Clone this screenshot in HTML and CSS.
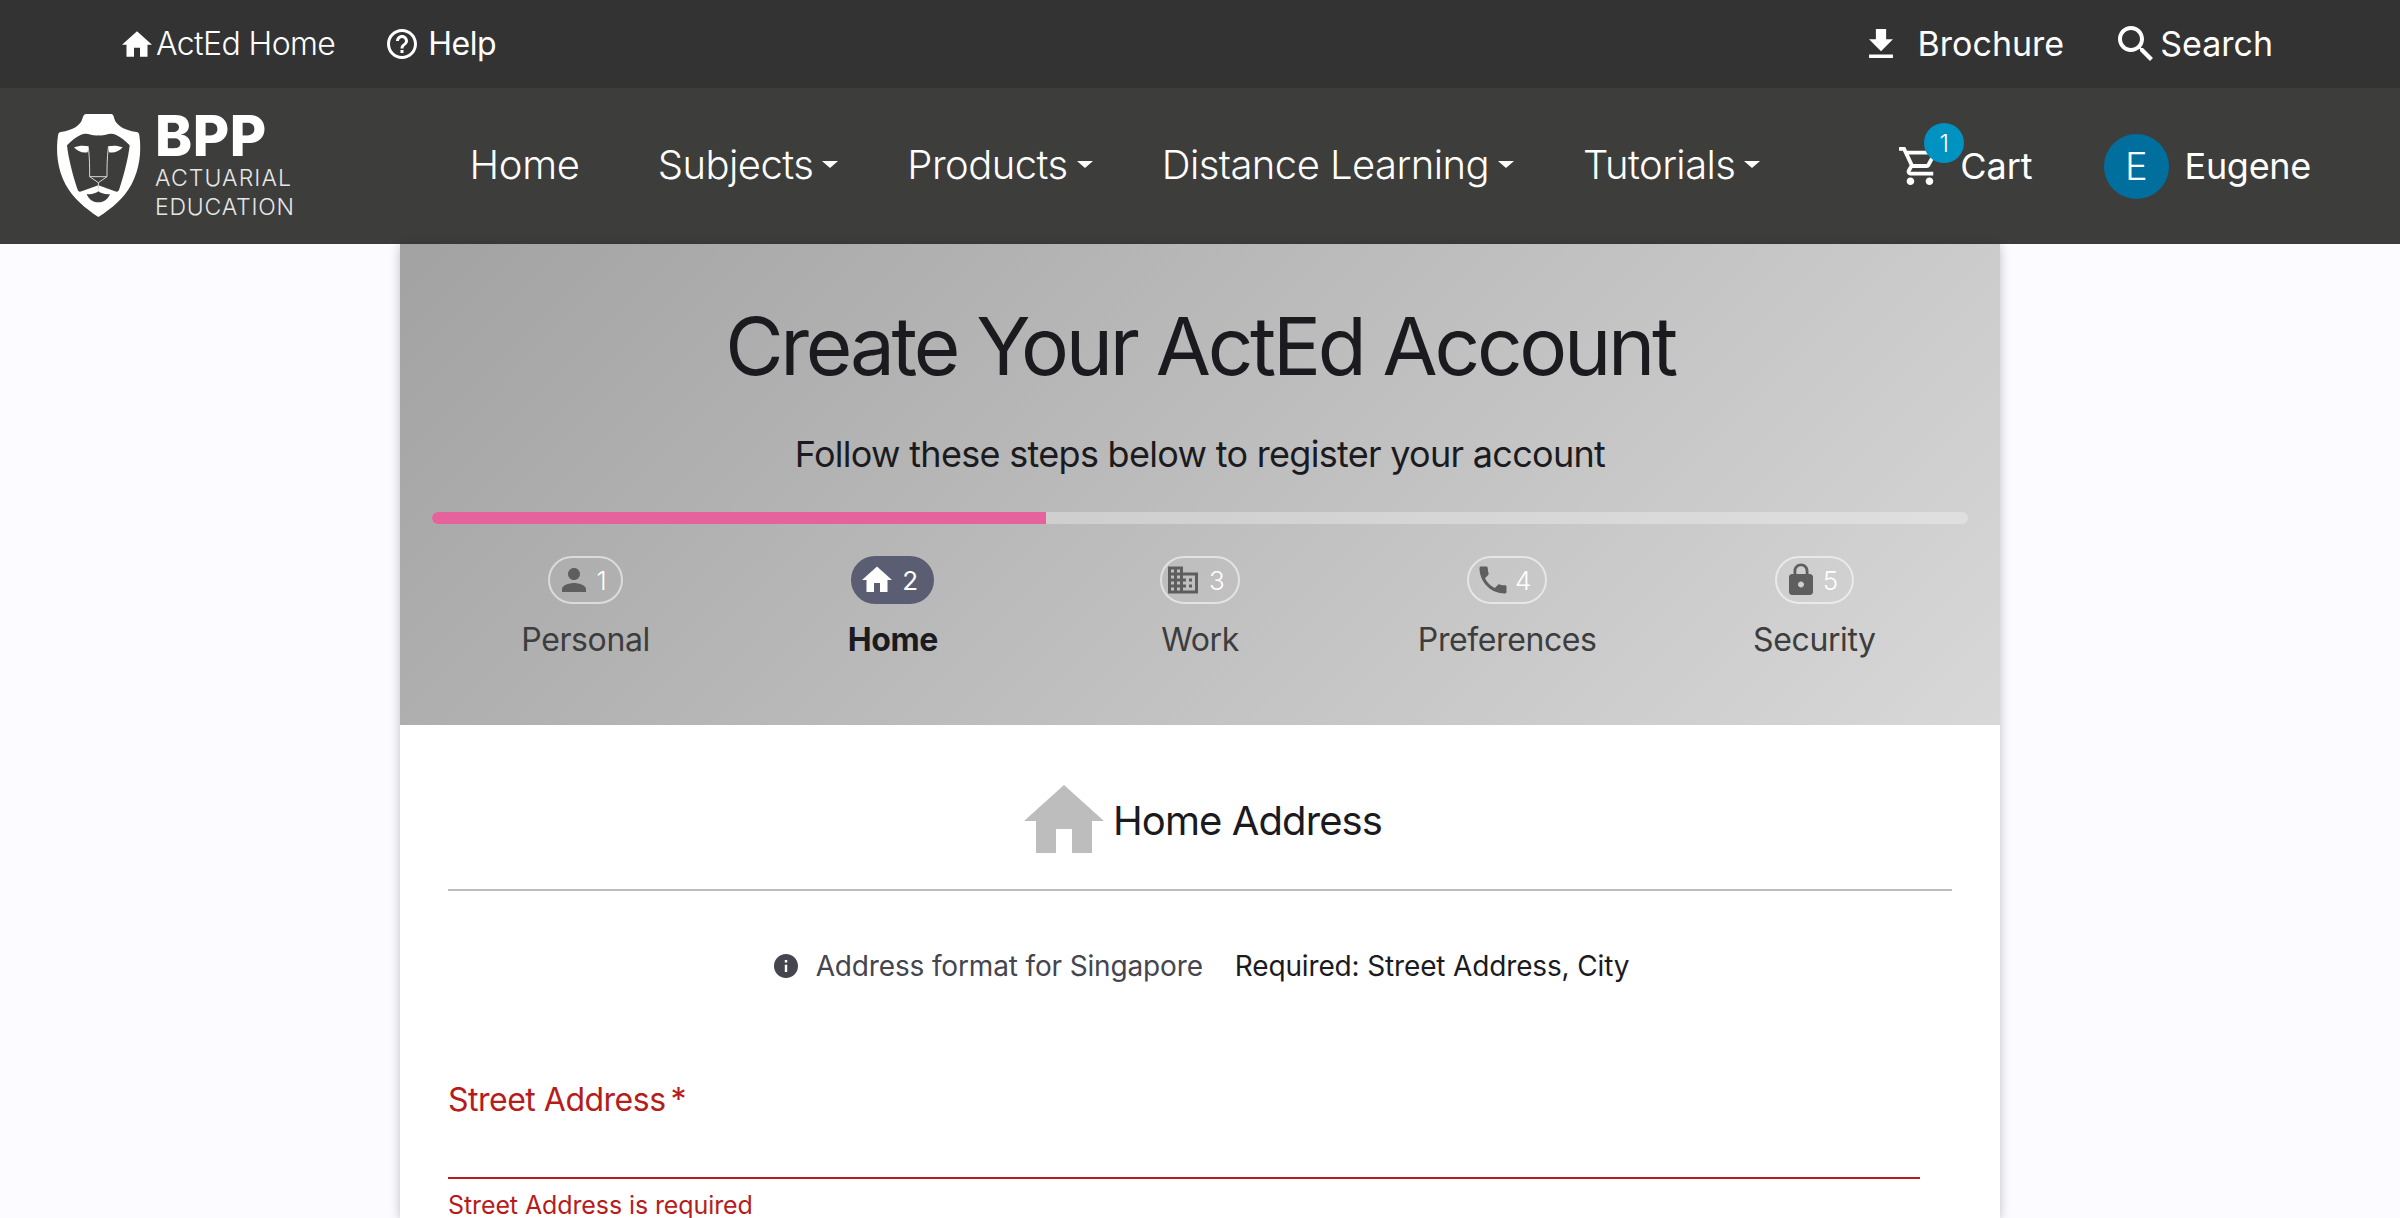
FILE: index.html
```html
<!DOCTYPE html>
<html lang="en">
<head>
<meta charset="utf-8">
<title>Create Your ActEd Account</title>
<link rel="stylesheet" href="styles.css">
</head>
<body>
<div class="topbar">
  <div class="top-left">
    <a class="top-link tl-home"><svg class="ic" viewBox="2 3 20 17"><path d="M10 20v-6h4v6h5v-8h3L12 3 2 12h3v8z"/></svg><span>ActEd Home</span></a>
    <a class="top-link tl-help"><svg class="ic-help" viewBox="0 0 24 24"><path d="M11 18h2v-2h-2v2zm1-16C6.48 2 2 6.48 2 12s4.48 10 10 10 10-4.48 10-10S17.52 2 12 2zm0 18c-4.41 0-8-3.59-8-8s3.59-8 8-8 8 3.59 8 8-3.59 8-8 8zm0-14c-2.21 0-4 1.79-4 4h2c0-1.1.9-2 2-2s2 .9 2 2c0 2-3 1.75-3 5h2c0-2.25 3-2.5 3-5 0-2.21-1.79-4-4-4z"/></svg><span>Help</span></a>
  </div>
  <div class="top-right">
    <a class="top-link tr-brochure"><svg class="ic-dl" viewBox="5 3 14 17"><path d="M19 9h-4V3H9v6H5l7 7 7-7zM5 18v2h14v-2H5z"/></svg><span>Brochure</span></a>
    <a class="top-link tr-search"><svg class="ic-search" viewBox="3 3 17.5 17.5"><path d="M15.5 14h-.79l-.28-.27C15.41 12.59 16 11.11 16 9.5 16 5.91 13.09 3 9.5 3S3 5.91 3 9.5 5.91 16 9.5 16c1.61 0 3.09-.59 4.23-1.57l.27.28v.79l5 4.99L20.49 19l-4.99-5zm-6 0C7.01 14 5 11.99 5 9.5S7.01 5 9.5 5 14 7.01 14 9.5 11.99 14 9.5 14z"/></svg><span>Search</span></a>
  </div>
</div>

<nav class="mainnav">
  <div class="logo">
    <svg class="shield" viewBox="0 0 300 342">
      <path class="s-w" d="M112 18H186C192 18 194 24 196 32C202 52 225 66 262 72C268 72 270 76 271 82C278 130 272 185 247 230C225 270 190 300 148 327C108 300 72 270 50 230C25 185 20 130 27 82C28 76 30 72 36 72C72 66 95 52 100 32C103 24 105 18 112 18Z"/>
      <path class="s-d" d="M148 82C165 86 180 72 200 80C215 86 230 100 242 112C238 150 225 200 212 240C208 252 205 252 198 250L148 232L98 250C91 252 88 252 84 240C71 200 58 150 54 112C66 100 81 86 96 80C116 72 131 86 148 82Z"/>
      <path class="s-w" d="M75 118C90 112 105 112 119 115L116 133C100 136 85 130 75 118ZM221 118C206 112 191 112 177 115L180 133C196 136 211 130 221 118Z"/>
      <path class="s-line" d="M118 118C122 150 122 180 122 206L148 224L174 206C174 180 174 150 178 118M122 206H174M148 224V245"/>
      <path class="s-d" d="M113 258C128 260 140 256 148 250C156 256 170 260 183 258C178 272 165 283 148 283C131 283 118 272 113 258Z"/>
    </svg>
    <div class="logo-text">
      <div class="logo-bpp">BPP</div>
      <div class="logo-sub">ACTUARIAL</div>
      <div class="logo-sub">EDUCATION</div>
    </div>
  </div>
  <div class="nav-links">
    <a class="nav-link nav-home">Home</a>
    <a class="nav-link caret">Subjects</a>
    <a class="nav-link caret">Products</a>
    <a class="nav-link caret">Distance Learning</a>
    <a class="nav-link caret">Tutorials</a>
  </div>
  <div class="nav-right">
    <a class="cart">
      <svg class="ic-cart" viewBox="1 2 21 20"><path d="M15.55 13c.75 0 1.41-.41 1.75-1.03l3.58-6.49c.37-.66-.11-1.48-.87-1.48H5.21l-.94-2H1v2h2l3.6 7.59-1.35 2.44C4.52 15.37 5.48 17 7 17h12v-2H7l1.1-2h7.45zM6.16 6h12.15l-2.76 5H8.53L6.16 6zM7 18c-1.1 0-1.99.9-1.99 2S5.9 22 7 22s2-.9 2-2-.9-2-2-2zm10 0c-1.1 0-1.99.9-1.99 2s.89 2 1.99 2 2-.9 2-2-.9-2-2-2z"/></svg>
      <span class="badge">1</span>
      <span>Cart</span>
    </a>
    <a class="user"><span class="avatar">E</span><span>Eugene</span></a>
  </div>
</nav>

<main class="card">
  <header class="card-head">
    <h1>Create Your ActEd Account</h1>
    <p class="lead">Follow these steps below to register your account</p>
    <div class="progress"><div class="progress-fill"></div></div>
    <div class="steps">
      <div class="step">
        <div class="pill"><svg class="pill-ic" viewBox="0 0 24 24"><path d="M12 12c2.21 0 4-1.79 4-4s-1.79-4-4-4-4 1.79-4 4 1.79 4 4 4zm0 2c-2.67 0-8 1.34-8 4v2h16v-2c0-2.66-5.33-4-8-4z"/></svg><span>1</span></div>
        <div class="step-label">Personal</div>
      </div>
      <div class="step active">
        <div class="pill"><svg class="pill-ic" viewBox="0 0 24 24"><path d="M10 20v-6h4v6h5v-8h3L12 3 2 12h3v8z"/></svg><span>2</span></div>
        <div class="step-label">Home</div>
      </div>
      <div class="step">
        <div class="pill pill-work"><svg class="pill-ic" viewBox="0 0 24 24"><path d="M12 7V3H2v18h20V7H12zM6 19H4v-2h2v2zm0-4H4v-2h2v2zm0-4H4V9h2v2zm0-4H4V5h2v2zm4 12H8v-2h2v2zm0-4H8v-2h2v2zm0-4H8V9h2v2zm0-4H8V5h2v2zm10 12h-8v-2h2v-2h-2v-2h2v-2h-2V9h8v10zm-2-8h-2v2h2v-2zm0 4h-2v2h2v-2z"/></svg><span>3</span></div>
        <div class="step-label">Work</div>
      </div>
      <div class="step">
        <div class="pill"><svg class="pill-ic" viewBox="0 0 24 24"><path d="M6.62 10.79c1.44 2.83 3.76 5.14 6.59 6.59l2.2-2.2c.27-.27.67-.36 1.02-.24 1.12.37 2.33.57 3.57.57.55 0 1 .45 1 1V20c0 .55-.45 1-1 1-9.39 0-17-7.61-17-17 0-.55.45-1 1-1h3.5c.55 0 1 .45 1 1 0 1.25.2 2.45.57 3.57.11.35.03.74-.25 1.02l-2.2 2.2z"/></svg><span>4</span></div>
        <div class="step-label">Preferences</div>
      </div>
      <div class="step">
        <div class="pill"><svg class="pill-ic" viewBox="0 0 24 24"><path d="M18 8h-1V6c0-2.76-2.24-5-5-5S7 3.24 7 6v2H6c-1.1 0-2 .9-2 2v10c0 1.1.9 2 2 2h12c1.1 0 2-.9 2-2V10c0-1.1-.9-2-2-2zm-6 9c-1.1 0-2-.9-2-2s.9-2 2-2 2 .9 2 2-.9 2-2 2zm3.1-9H8.9V6c0-1.71 1.39-3.1 3.1-3.1 1.71 0 3.1 1.39 3.1 3.1v2z"/></svg><span>5</span></div>
        <div class="step-label">Security</div>
      </div>
    </div>
  </header>
  <section class="card-body">
    <div class="section-title">
      <svg class="title-ic" viewBox="2 3 20 17" preserveAspectRatio="none"><path d="M10 20v-6h4v6h5v-8h3L12 3 2 12h3v8z"/></svg>
      <h2>Home Address</h2>
    </div>
    <div class="format">
      <svg class="info-ic" viewBox="2 2 20 20"><path d="M12 2C6.48 2 2 6.48 2 12s4.48 10 10 10 10-4.48 10-10S17.52 2 12 2zm1 15h-2v-6h2v6zm0-8h-2V7h2v2z"/></svg>
      <span class="format-name">Address format for Singapore</span>
      <span class="format-req">Required: Street Address, City</span>
    </div>
    <div class="field">
      <label class="field-label">Street Address<span class="req">*</span></label>
      <div class="field-input"></div>
      <div class="field-error">Street Address is required</div>
    </div>
  </section>
</main>
</body>
</html>
```
FILE: styles.css
```css
* { box-sizing: border-box; }
html, body { height: 100%; }
body {
  margin: 0;
  overflow: hidden;
  background: #fcfbff;
  font-family: Inter, "Liberation Sans", sans-serif;
  color: #1a1a1a;
}
a { color: inherit; text-decoration: none; }

.topbar {
  height: 88px;
  background: #333333;
  color: #fff;
  display: flex;
  justify-content: space-between;
  align-items: center;
  padding: 0 127px 1px 122px;
}
.top-left, .top-right, .top-link { display: flex; align-items: center; }
.top-link { font-size: 34px; }
.tl-home { font-size: 32px; font-weight: 300; letter-spacing: -.6px; }
.tl-help { font-size: 32px; letter-spacing: -.5px; margin-left: 49px; }
.tl-home .ic { width: 30px; height: 26px; fill: #fff; margin-right: 4px; }
.ic-help { width: 36px; height: 36px; fill: #fff; margin-right: 8px; }
.ic-dl { width: 24px; height: 29px; fill: #fff; margin-right: 25px; }
.ic-search { width: 35px; height: 35px; fill: #fff; margin-right: 7px; }
.tr-search { margin-left: 54px; }

.mainnav {
  height: 156px;
  background: #3d3d3c;
  color: #fff;
  display: flex;
  align-items: center;
  padding: 0 89px 0 48.5px;
}
.logo { display: flex; align-items: flex-start; width: 421px; margin-top: -2px; }
.shield { width: 100px; height: 114px; flex: none; }
.s-w { fill: #fff; }
.s-d { fill: #3d3d3c; }
.s-line { fill: none; stroke: #d8d8d8; stroke-width: 3; }
.logo-text { margin-left: 6.5px; margin-top: 6px; }
.logo-bpp { font-size: 56px; font-weight: 800; line-height: 50px; letter-spacing: .5px; margin-top: -3px; margin-bottom: 3px; }
.logo-sub { font-size: 23px; font-weight: 300; line-height: 29px; letter-spacing: 1.1px; color: #e6e6e6; }
.logo-sub + .logo-sub { letter-spacing: .8px; }

.nav-links { display: flex; align-items: center; gap: 69px; margin-top: -3px; }
.nav-link { font-size: 40px; font-weight: 300; letter-spacing: -.55px; display: flex; align-items: center; }
.nav-home { letter-spacing: -.3px; margin-right: 9px; }
.caret::after {
  content: "";
  margin-left: 9px;
  border-top: 7px solid #fff;
  border-left: 8.5px solid transparent;
  border-right: 8.5px solid transparent;
}
.nav-right { margin-left: auto; display: flex; align-items: center; font-size: 36px; }
.cart { position: relative; display: flex; align-items: center; }
.ic-cart { width: 40px; height: 38px; fill: #fff; margin-right: 21px; }
.badge {
  position: absolute;
  left: 25px;
  top: -21px;
  width: 40px;
  height: 40px;
  border-radius: 50%;
  background: #0092c1;
  font-size: 24px;
  font-weight: 300;
  display: flex;
  align-items: center;
  justify-content: center;
}
.user { display: flex; align-items: center; margin-left: 71px; letter-spacing: -.3px; }
.avatar {
  width: 65px;
  height: 65px;
  border-radius: 50%;
  background: #006f9e;
  font-weight: 300;
  font-size: 38px;
  display: flex;
  align-items: center;
  justify-content: center;
  margin-right: 16px;
}

.card {
  width: 1600px;
  margin: 0 auto;
  background: #fff;
  box-shadow: 0 2px 10px rgba(0,0,0,.25);
  height: 974px;
  overflow: hidden;
}
.card-head {
  height: 481px;
  background: linear-gradient(135deg, #a2a2a2 0%, #d8d8d8 100%);
  padding: 0 32px;
  text-align: center;
}
h1 {
  margin: 0;
  padding-top: 54px;
  font-size: 80px;
  line-height: 96px;
  font-weight: 400;
  letter-spacing: -3.3px;
  color: #1b1b1f;
}
.lead { margin: 38px 0 0; font-size: 36px; line-height: 44px; font-weight: 400; letter-spacing: -.7px; color: #1b1b1f; }
.progress { height: 12px; margin-top: 36px; border-radius: 6px; background: rgba(255,255,255,.3); overflow: hidden; }
.progress-fill { width: 40%; height: 100%; background: #e5629c; }
.steps { display: grid; grid-template-columns: repeat(5, 1fr); margin-top: 32px; }
.step { display: flex; flex-direction: column; align-items: center; }
.pill {
  height: 48px;
  padding: 0 14px 0 6px;
  border: 2px solid rgba(255,255,255,.55);
  border-radius: 24px;
  display: flex;
  align-items: center;
  gap: 4px;
  color: #fff;
  font-size: 26px;
  font-weight: 300;
}
.pill-ic { width: 36px; height: 36px; fill: #5e5e5e; }
.pill-work { padding: 0 13px 0 3px; gap: 8px; }
.step-label { margin-top: 16px; font-size: 32px; line-height: 40px; color: #3d3d3d; font-weight: 400; letter-spacing: -.4px; }
.active .pill { background: #5b5d72; border-color: #5b5d72; font-weight: 400; gap: 7px; }
.active .pill-ic { fill: #fff; }
.active .step-label { font-weight: 700; color: #1b1b1f; }

.card-body { padding: 0 48px; }
.section-title {
  display: flex;
  align-items: center;
  justify-content: center;
  height: 166px;
  border-bottom: 2px solid #bdbdbd;
  padding: 27px 0 0 6px;
}
.title-ic { width: 80px; height: 68px; fill: #bdbdbd; margin-right: 9px; margin-top: -3px; }
h2 { margin: 0; font-size: 40px; font-weight: 400; letter-spacing: -.9px; color: #1b1b1f; }
.format {
  display: flex;
  align-items: center;
  justify-content: center;
  height: 149px;
  padding-left: 3px;
  font-size: 28px;
  letter-spacing: -.15px;
}
.info-ic { width: 24px; height: 24px; fill: #45454f; margin-right: 18px; }
.format-name { color: #45454f; margin-right: 32px; }
.format-req { color: #1b1b1f; }
.field { width: 1472px; }
.field-label { display: block; padding-top: 40px; font-size: 32px; line-height: 40px; letter-spacing: -.5px; color: #b71c1c; }
.req { margin-left: 5px; }
.field-input { height: 59px; border-bottom: 2px solid #b71c1c; }
.field-error { margin-top: 10px; font-size: 25px; line-height: 32px; letter-spacing: -.1px; color: #b71c1c; }
```
